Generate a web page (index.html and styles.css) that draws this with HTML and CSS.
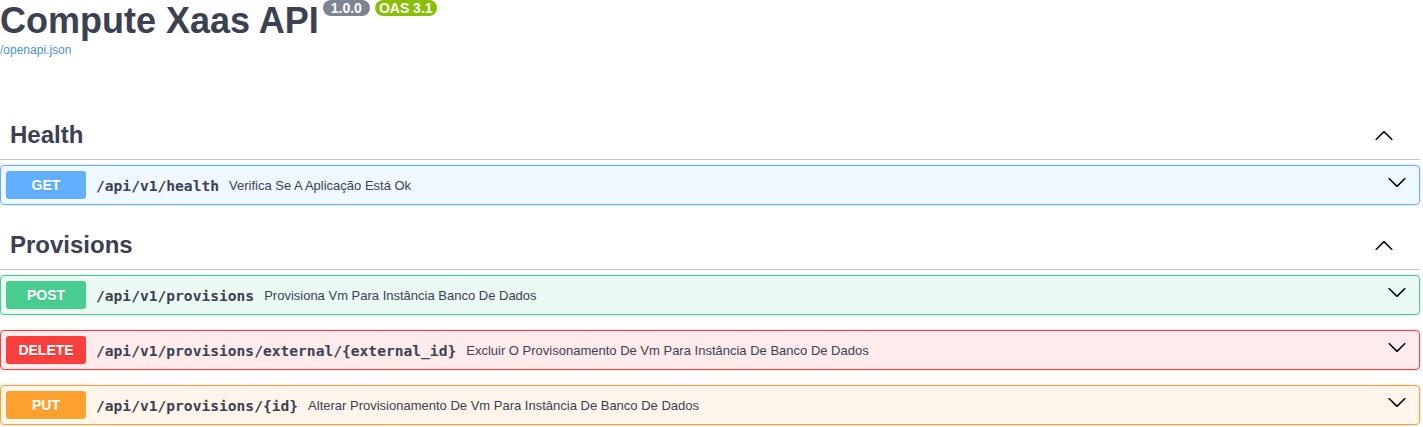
FILE: index.html
```html
<!DOCTYPE html>
<html lang="pt">
<head>
<meta charset="utf-8">
<title>Compute Xaas API</title>
<link rel="stylesheet" href="styles.css">
</head>
<body>
<div class="wrapper">
  <div class="info">
    <h2 class="title">Compute Xaas API<span class="badge badge-version">1.0.0</span><span class="badge badge-oas">OAS 3.1</span></h2>
    <a class="url" href="#">/openapi.json</a>
  </div>

  <section class="tag-section">
    <div class="tag">
      <h3 class="tag-name">Health</h3>
      <span class="tag-toggle">
        <svg width="20" height="20" viewBox="0 0 20 20"><path d="M17.418 14.908c.27.272.7.272.968 0 .268-.27.268-.707 0-.978l-7.908-7.83c-.268-.27-.7-.27-.968 0l-7.908 7.83c-.27.27-.27.707 0 .978.268.27.7.27.968 0L10 7.636l7.418 7.272z"/></svg>
      </span>
    </div>
    <div class="opblock op-get">
      <span class="method">GET</span>
      <span class="path">/api/v1/health</span>
      <span class="desc">Verifica Se A Aplicação Está Ok</span>
      <span class="op-toggle"><svg width="20" height="20" viewBox="0 0 20 20"><path d="M17.418 6.109c.272-.268.709-.268.979 0s.271.701 0 .969l-7.908 7.83c-.27.268-.707.268-.979 0l-7.908-7.83c-.27-.268-.27-.701 0-.969.271-.268.709-.268.979 0L10 13.25l7.418-7.141z"/></svg></span>
    </div>
  </section>

  <section class="tag-section">
    <div class="tag">
      <h3 class="tag-name">Provisions</h3>
      <span class="tag-toggle">
        <svg width="20" height="20" viewBox="0 0 20 20"><path d="M17.418 14.908c.27.272.7.272.968 0 .268-.27.268-.707 0-.978l-7.908-7.83c-.268-.27-.7-.27-.968 0l-7.908 7.83c-.27.27-.27.707 0 .978.268.27.7.27.968 0L10 7.636l7.418 7.272z"/></svg>
      </span>
    </div>
    <div class="opblock op-post">
      <span class="method">POST</span>
      <span class="path">/api/v1/provisions</span>
      <span class="desc">Provisiona Vm Para Instância Banco De Dados</span>
      <span class="op-toggle"><svg width="20" height="20" viewBox="0 0 20 20"><path d="M17.418 6.109c.272-.268.709-.268.979 0s.271.701 0 .969l-7.908 7.83c-.27.268-.707.268-.979 0l-7.908-7.83c-.27-.268-.27-.701 0-.969.271-.268.709-.268.979 0L10 13.25l7.418-7.141z"/></svg></span>
    </div>
    <div class="opblock op-delete">
      <span class="method">DELETE</span>
      <span class="path">/api/v1/provisions/external/{external_id}</span>
      <span class="desc">Excluir O Provisonamento De Vm Para Instância De Banco De Dados</span>
      <span class="op-toggle"><svg width="20" height="20" viewBox="0 0 20 20"><path d="M17.418 6.109c.272-.268.709-.268.979 0s.271.701 0 .969l-7.908 7.83c-.27.268-.707.268-.979 0l-7.908-7.83c-.27-.268-.27-.701 0-.969.271-.268.709-.268.979 0L10 13.25l7.418-7.141z"/></svg></span>
    </div>
    <div class="opblock op-put">
      <span class="method">PUT</span>
      <span class="path">/api/v1/provisions/{id}</span>
      <span class="desc">Alterar Provisionamento De Vm Para Instância De Banco De Dados</span>
      <span class="op-toggle"><svg width="20" height="20" viewBox="0 0 20 20"><path d="M17.418 6.109c.272-.268.709-.268.979 0s.271.701 0 .969l-7.908 7.83c-.27.268-.707.268-.979 0l-7.908-7.83c-.27-.268-.27-.701 0-.969.271-.268.709-.268.979 0L10 13.25l7.418-7.141z"/></svg></span>
    </div>
  </section>
</div>
</body>
</html>
```

FILE: styles.css
```css
html, body {
  margin: 0;
  padding: 0;
  background: #fff;
}

body {
  font-family: "Liberation Sans", Arial, sans-serif;
  color: #3b4151;
}

.wrapper {
  width: 1420px;
}

.info {
  margin: 0 0 52px;
}

.title {
  margin: 0;
  font-size: 36px;
  font-weight: 700;
  line-height: 42px;
  height: 42px;
  color: #3b4151;
}

.badge {
  display: inline-block;
  vertical-align: top;
  margin-left: 5px;
  height: 16px;
  line-height: 16px;
  font-size: 14px;
  font-weight: 700;
  color: #fff;
  border-radius: 57px;
}

.badge-version {
  background: #7d8492;
  padding: 0 8px;
  margin-left: 4px;
}

.badge-oas {
  background: #89bf04;
  padding: 0 4px;
}

.url {
  display: block;
  font-size: 12px;
  line-height: 16px;
  color: #4990e2;
  text-decoration: none;
}

.tag-section {
  display: flex;
  flex-direction: column;
}

.tag {
  display: flex;
  align-items: center;
  padding: 10px 26px 10px 10px;
  border-bottom: 1px solid rgba(59, 65, 81, 0.3);
  margin: 0 0 5px;
  height: 29px;
}

.tag-name {
  flex: 1;
  margin: 0;
  font-size: 24px;
  font-weight: 700;
  line-height: 29px;
  color: #3b4151;
}

.tag-toggle {
  display: flex;
  width: 20px;
  height: 20px;
}

.tag-toggle svg,
.op-toggle svg {
  fill: #000;
  display: block;
}

.opblock {
  display: flex;
  align-items: center;
  padding: 5px;
  margin: 0 0 15px;
  border: 1px solid #000;
  border-radius: 4px;
  box-shadow: 0 0 3px rgba(0, 0, 0, 0.19);
}

.method {
  min-width: 80px;
  padding: 6px 0;
  font-size: 14px;
  line-height: 16px;
  font-weight: 700;
  text-align: center;
  color: #fff;
  border-radius: 3px;
  text-shadow: 0 1px 0 rgba(0, 0, 0, 0.1);
}

.path {
  padding: 0 10px;
  font-family: "DejaVu Sans Mono", "Liberation Mono", monospace;
  font-size: 14.6px;
  font-weight: 700;
  color: #3b4151;
}

.desc {
  flex: 1;
  font-size: 13px;
  color: #3b4151;
}

.op-toggle {
  display: flex;
  width: 20px;
  height: 20px;
  margin-right: 7px;
  margin-top: -6px;
}

.op-get { border-color: #61affe; background: rgba(97, 175, 254, 0.1); }
.op-get .method { background: #61affe; }

.op-post { border-color: #49cc90; background: rgba(73, 204, 144, 0.1); }
.op-post .method { background: #49cc90; }

.op-delete { border-color: #f93e3e; background: rgba(249, 62, 62, 0.1); }
.op-delete .method { background: #f93e3e; }

.op-put { border-color: #fca130; background: rgba(252, 161, 48, 0.1); }
.op-put .method { background: #fca130; }
```
